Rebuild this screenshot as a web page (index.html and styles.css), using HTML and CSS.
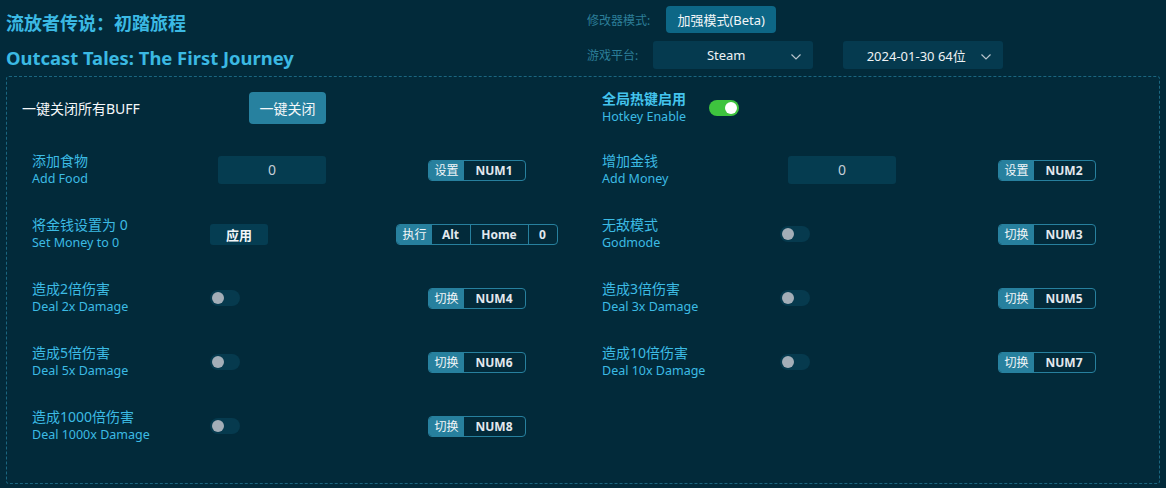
FILE: index.html
```html
<!DOCTYPE html>
<html lang="zh-CN">
<head>
  <meta charset="UTF-8">
  <meta name="viewport" content="width=device-width, initial-scale=1.0">
  <title>流放者传说：初踏旅程</title>
  <link rel="stylesheet" href="styles.css">
</head>
<body>
  <div class="app">
    <header class="top">
      <div class="titles">
        <h1 class="title-cn">流放者传说：初踏旅程</h1>
        <h2 class="title-en">Outcast Tales: The First Journey</h2>
      </div>
      <div class="settings">
        <div class="setting mode-row">
          <span class="setting-label">修改器模式:</span>
          <button class="mode-btn">加强模式(Beta)</button>
        </div>
        <div class="setting platform-row">
          <span class="setting-label">游戏平台:</span>
          <div class="select">
            <span class="select-text">Steam</span>
            <svg class="chevron" width="10" height="6" viewBox="0 0 10 6"><polyline points="0.5,0.5 5,5 9.5,0.5" fill="none" stroke="#b8c4cc" stroke-width="1.2"/></svg>
          </div>
          <div class="select version">
            <span class="select-text">2024-01-30 64位</span>
            <svg class="chevron" width="10" height="6" viewBox="0 0 10 6"><polyline points="0.5,0.5 5,5 9.5,0.5" fill="none" stroke="#b8c4cc" stroke-width="1.2"/></svg>
          </div>
        </div>
      </div>
    </header>

    <main class="panel">
      <div class="grid">
        <!-- 第一行 -->
        <div class="cell head head-left">
          <span class="buff-text">一键关闭所有BUFF</span>
          <button class="close-btn">一键关闭</button>
        </div>
        <div class="cell head head-right">
          <div class="label">
            <div class="cn strong">全局热键启用</div>
            <div class="en">Hotkey Enable</div>
          </div>
          <span class="toggle on"><span class="knob"></span></span>
        </div>

        <!-- 添加食物 / 增加金钱 -->
        <div class="cell">
          <div class="label"><div class="cn">添加食物</div><div class="en">Add Food</div></div>
          <div class="ctrl"><div class="num-input">0</div></div>
          <div class="bind"><span class="bind-tag">设置</span><span class="key num">NUM1</span></div>
        </div>
        <div class="cell">
          <div class="label"><div class="cn">增加金钱</div><div class="en">Add Money</div></div>
          <div class="ctrl"><div class="num-input">0</div></div>
          <div class="bind"><span class="bind-tag">设置</span><span class="key num">NUM2</span></div>
        </div>

        <!-- 将金钱设置为0 / 无敌模式 -->
        <div class="cell">
          <div class="label"><div class="cn">将金钱设置为 0</div><div class="en">Set Money to 0</div></div>
          <div class="ctrl"><button class="apply-btn">应用</button></div>
          <div class="bind"><span class="bind-tag">执行</span><span class="key alt">Alt</span><span class="key home">Home</span><span class="key zero">0</span></div>
        </div>
        <div class="cell">
          <div class="label"><div class="cn">无敌模式</div><div class="en">Godmode</div></div>
          <div class="ctrl"><span class="toggle"><span class="knob"></span></span></div>
          <div class="bind"><span class="bind-tag">切换</span><span class="key num">NUM3</span></div>
        </div>

        <div class="cell">
          <div class="label"><div class="cn">造成2倍伤害</div><div class="en">Deal 2x Damage</div></div>
          <div class="ctrl"><span class="toggle"><span class="knob"></span></span></div>
          <div class="bind"><span class="bind-tag">切换</span><span class="key num">NUM4</span></div>
        </div>
        <div class="cell">
          <div class="label"><div class="cn">造成3倍伤害</div><div class="en">Deal 3x Damage</div></div>
          <div class="ctrl"><span class="toggle"><span class="knob"></span></span></div>
          <div class="bind"><span class="bind-tag">切换</span><span class="key num">NUM5</span></div>
        </div>

        <div class="cell">
          <div class="label"><div class="cn">造成5倍伤害</div><div class="en">Deal 5x Damage</div></div>
          <div class="ctrl"><span class="toggle"><span class="knob"></span></span></div>
          <div class="bind"><span class="bind-tag">切换</span><span class="key num">NUM6</span></div>
        </div>
        <div class="cell">
          <div class="label"><div class="cn">造成10倍伤害</div><div class="en">Deal 10x Damage</div></div>
          <div class="ctrl"><span class="toggle"><span class="knob"></span></span></div>
          <div class="bind"><span class="bind-tag">切换</span><span class="key num">NUM7</span></div>
        </div>

        <div class="cell">
          <div class="label"><div class="cn">造成1000倍伤害</div><div class="en">Deal 1000x Damage</div></div>
          <div class="ctrl"><span class="toggle"><span class="knob"></span></span></div>
          <div class="bind"><span class="bind-tag">切换</span><span class="key num">NUM8</span></div>
        </div>
      </div>
    </main>
  </div>
</body>
</html>
```

FILE: styles.css
```css
* {
  box-sizing: border-box;
}

body {
  margin: 0;
  background: #022a3a;
  font-family: "Noto Sans", "Noto Sans CJK SC", sans-serif;
  color: #3cbbe4;
}

button {
  border: none;
  margin: 0;
  padding: 0;
  font-family: inherit;
  cursor: pointer;
}

.app {
  width: 1166px;
  height: 488px;
}

/* 顶部 */
.top {
  display: flex;
  height: 76px;
  padding-left: 6px;
}

.titles {
  width: 581px;
  padding-top: 9px;
}

.title-cn,
.title-en {
  margin: 0;
  font-size: 18px;
  font-weight: 700;
  line-height: 28px;
  color: #3bb9e3;
  white-space: nowrap;
}

.title-en {
  margin-top: 7px;
  font-size: 18.4px;
}

.settings {
  padding-top: 6px;
}

.setting {
  display: flex;
  align-items: center;
}

.mode-row {
  height: 27px;
}

.platform-row {
  height: 28px;
  margin-top: 8px;
}

.setting-label {
  font-size: 12px;
  color: #2c7e98;
  margin-right: 15px;
}

.mode-row .setting-label {
  margin-right: 16px;
}

.mode-btn {
  width: 110px;
  height: 27px;
  border-radius: 4px;
  background: #0d6786;
  color: #f2f6f8;
  font-size: 13px;
}

.select {
  display: flex;
  align-items: center;
  width: 160px;
  height: 28px;
  padding: 0 12px 0 8px;
  border-radius: 3px;
  background: #053a4f;
  color: #eef2f4;
  font-size: 13px;
}

.select.version {
  margin-left: 30px;
}

.select-text {
  flex: 1;
  text-align: center;
}

.chevron {
  margin-top: 3px;
}

/* 主面板 */
.panel {
  margin-left: 6px;
  width: 1154px;
  height: 408px;
  border: 1px dashed #1a6680;
  border-radius: 3px;
}

.grid {
  display: grid;
  grid-template-columns: 570px 570px;
  grid-template-rows: 61px repeat(5, 64px);
  margin-left: 5px;
}

.cell {
  display: grid;
  grid-template-columns: 178px 162px 210px;
  align-items: center;
  padding-left: 20px;
}

.cell.head {
  display: flex;
  align-items: center;
}

.head-left {
  padding-left: 10px;
}

.buff-text {
  width: 227px;
  font-size: 14px;
  color: #f4f7f9;
}

.close-btn {
  width: 77px;
  height: 32px;
  border-radius: 4px;
  background: #27819f;
  color: #f4f7f9;
  font-size: 14px;
}

.head-right .label {
  width: 107px;
}

.label {
  line-height: 18px;
  white-space: nowrap;
}

.cn {
  font-size: 14px;
}

.cn.strong {
  font-weight: 700;
  color: #44c4ee;
}

.en {
  font-size: 12.5px;
}

.num-input {
  margin-left: 8px;
  width: 108px;
  height: 28px;
  line-height: 28px;
  border-radius: 3px;
  background: #053c50;
  color: #c4ced6;
  text-align: center;
  font-size: 14px;
}

.apply-btn {
  width: 58px;
  height: 21px;
  border-radius: 3px;
  background: #053d52;
  color: #f2f6f8;
  font-size: 13px;
  font-weight: 700;
}

/* 开关 */
.toggle {
  display: flex;
  align-items: center;
  width: 30px;
  height: 16px;
  padding: 0 2px;
  border-radius: 8px;
  background: #063a4e;
}

.toggle .knob {
  width: 12px;
  height: 12px;
  border-radius: 50%;
  background: #a3aeb8;
}

.toggle.on {
  justify-content: flex-end;
  background: #3ec43e;
}

.toggle.on .knob {
  background: #ffffff;
}

/* 热键 */
.bind {
  justify-self: center;
  display: flex;
  height: 21px;
  border: 1px solid #27809e;
  border-radius: 4px;
  overflow: hidden;
  font-size: 12px;
  line-height: 19px;
}

.bind-tag {
  padding: 0 5px;
  background: #27809e;
  color: #f2f6f8;
  font-size: 12px;
}

.key {
  text-align: center;
  color: #e2e8ee;
  font-weight: 700;
}

.key + .key {
  border-left: 1px solid #27809e;
}

.key.num {
  width: 61px;
}

.key.alt {
  width: 38px;
}

.key.home {
  width: 58px;
}

.key.zero {
  width: 29px;
}
```
